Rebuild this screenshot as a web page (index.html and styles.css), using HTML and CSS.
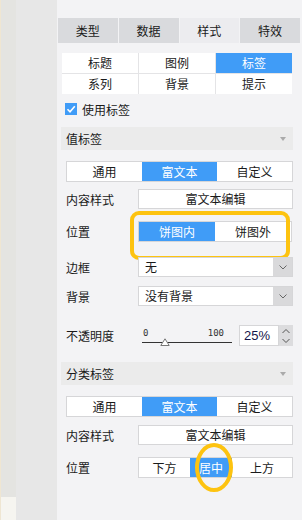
FILE: index.html
```html
<!DOCTYPE html>
<html lang="zh-CN">
<head>
    <meta charset="UTF-8">
    <title>样式 - 标签</title>
    <link rel="stylesheet" href="styles.css">
</head>
<body>
    <div class="page">
        <div class="side">
            <div class="side-edge"></div>
            <div class="side-gray"></div>
        </div>
        <div class="panel">
            <ul class="tabs">
                <li>类型</li>
                <li>数据</li>
                <li class="on">样式</li>
                <li>特效</li>
            </ul>
            <ul class="subtabs">
                <li>标题</li>
                <li>图例</li>
                <li class="on">标签</li>
                <li>系列</li>
                <li>背景</li>
                <li>提示</li>
            </ul>
            <label class="check">
                <span class="box">
                    <svg width="12" height="12" viewBox="0 0 12 12"><path d="M2.5 6.3 L5 8.8 L9.8 3.2" fill="none" stroke="#fff" stroke-width="1.6"/></svg>
                </span>
                使用标签
            </label>

            <div class="group">
                <div class="group-head">值标签<span class="caret"></span></div>
                <div class="group-body">
                    <ul class="seg seg-full">
                        <li>通用</li>
                        <li class="on">富文本</li>
                        <li>自定义</li>
                    </ul>
                    <div class="row row-content">
                        <span class="label">内容样式</span>
                        <button class="btn">富文本编辑</button>
                    </div>
                    <div class="row row-pos">
                        <span class="label">位置</span>
                        <ul class="seg seg-two">
                            <li class="on">饼图内</li>
                            <li>饼图外</li>
                        </ul>
                        <div class="mark-rect"></div>
                    </div>
                    <div class="row row-border">
                        <span class="label">边框</span>
                        <div class="select"><span class="val">无</span><span class="arrow"><svg width="8" height="5" viewBox="0 0 8 5"><path d="M0.5 0.5 L4 4 L7.5 0.5" fill="none" stroke="#666" stroke-width="1"/></svg></span></div>
                    </div>
                    <div class="row row-bg">
                        <span class="label">背景</span>
                        <div class="select"><span class="val">没有背景</span><span class="arrow"><svg width="8" height="5" viewBox="0 0 8 5"><path d="M0.5 0.5 L4 4 L7.5 0.5" fill="none" stroke="#666" stroke-width="1"/></svg></span></div>
                    </div>
                    <div class="row row-alpha">
                        <span class="label">不透明度</span>
                        <div class="slider">
                            <div class="ticks"><span>0</span><span>100</span></div>
                            <div class="track">
                                <svg class="thumb" width="10" height="8" viewBox="0 0 10 8"><path d="M5 0.8 L9.2 7.5 L0.8 7.5 Z" fill="#fff" stroke="#777" stroke-width="1"/></svg>
                            </div>
                        </div>
                        <div class="spin">
                            <span class="num">25%</span>
                            <span class="spin-btn">
                                <svg width="10" height="18" viewBox="0 0 10 18"><path d="M1.5 6 L5 2.5 L8.5 6" fill="none" stroke="#555" stroke-width="1"/><path d="M1.5 12 L5 15.5 L8.5 12" fill="none" stroke="#555" stroke-width="1"/></svg>
                            </span>
                        </div>
                    </div>
                </div>
            </div>

            <div class="group group-cat">
                <div class="group-head">分类标签<span class="caret"></span></div>
                <div class="group-body">
                    <ul class="seg seg-full">
                        <li>通用</li>
                        <li class="on">富文本</li>
                        <li>自定义</li>
                    </ul>
                    <div class="row row-content2">
                        <span class="label">内容样式</span>
                        <button class="btn">富文本编辑</button>
                    </div>
                    <div class="row row-pos2">
                        <span class="label">位置</span>
                        <ul class="seg seg-three">
                            <li class="w1">下方</li>
                            <li class="w2 on">居中</li>
                            <li class="w3">上方</li>
                        </ul>
                        <div class="mark-oval"></div>
                    </div>
                </div>
            </div>
        </div>
    </div>
</body>
</html>
```

FILE: styles.css
```css
*{
    margin: 0;
    padding: 0;
    list-style: none;
    box-sizing: border-box;
}
body{
    background: #f3f3f5;
    font-family: "Noto Sans CJK SC", "Noto Sans", sans-serif;
    font-size: 12px;
    color: #1a1a1a;
}
.page{
    display: flex;
    height: 520px;
    overflow: hidden;
}

/* left strip */
.side{
    display: flex;
    width: 57px;
    flex: none;
}
.side-edge{
    width: 16px;
    border-left: 1px solid #efe6d2;
    background: linear-gradient(#e4e4e1 0, #e4e4e1 497px, #f6f5f0 497px);
}
.side-gray{
    flex: 1;
    background: #e7e7e7;
}

.panel{
    flex: 1;
    padding-top: 18px;
}

/* top tabs */
.tabs{
    display: grid;
    grid-template-columns: repeat(4, 1fr);
    gap: 1px;
    width: 242px;
    margin-left: 1px;
    height: 25px;
}
.tabs li{
    background: #d9dadd;
    text-align: center;
    line-height: 25px;
}
.tabs li.on{
    background: #ececef;
}

/* sub tabs */
.subtabs{
    display: grid;
    grid-template-columns: repeat(3, 1fr);
    grid-auto-rows: 20px;
    gap: 1px;
    width: 230px;
    margin: 10px 0 0 5px;
    background: #e4e4e6;
}
.subtabs li{
    background: #fff;
    text-align: center;
    line-height: 20px;
}
.subtabs li.on{
    background: #409cf7;
    color: #fff;
}

.check{
    display: flex;
    align-items: center;
    gap: 5px;
    height: 20px;
    margin: 5px 0 0 8px;
}
.check .box{
    display: block;
    width: 12px;
    height: 12px;
    background: #409cf7;
}
.check svg{
    display: block;
}

/* groups */
.group{
    width: 232px;
    margin: 8px 0 0 4px;
}
.group-cat{
    margin-top: 16px;
}
.group-head{
    position: relative;
    height: 23px;
    line-height: 23px;
    padding-left: 5px;
    background: #ebebeb;
}
.caret{
    position: absolute;
    right: 7px;
    top: 10px;
    border-left: 3px solid transparent;
    border-right: 3px solid transparent;
    border-top: 4px solid #aaa;
}
.group-body{
    padding-left: 5px;
}

/* segmented buttons */
.seg{
    display: flex;
    border: 1px solid #d6d6d8;
    background: #fff;
    height: 21px;
}
.seg li{
    flex: 1;
    text-align: center;
    line-height: 19px;
}
.seg li.on{
    background: #409cf7;
    color: #fff;
}
.seg-full{
    margin-top: 11px;
}
.seg-two{
    width: 154px;
}
.seg-three{
    width: 155px;
}
.seg-three .w1{
    flex: none;
    width: 51px;
}
.seg-three .w2{
    flex: none;
    width: 42px;
}
.seg-three .w3{
    flex: none;
    width: 60px;
}

.row{
    position: relative;
    display: flex;
    align-items: center;
}
.label{
    width: 72px;
    flex: none;
}
.row-content{
    margin-top: 7px;
}
.row-pos{
    margin-top: 12px;
}
.row-border{
    margin-top: 15px;
}
.row-bg{
    margin-top: 9px;
}
.row-alpha{
    margin-top: 19px;
}
.row-content2{
    margin-top: 8px;
}
.row-pos2{
    margin-top: 12px;
}

.btn{
    width: 155px;
    height: 20px;
    border: 1px solid #d6d6d8;
    background: #fff;
    font-family: inherit;
    font-size: 12px;
    color: #1a1a1a;
    line-height: 18px;
}

.select{
    display: flex;
    width: 155px;
    height: 20px;
    border: 1px solid #d6d6d8;
    background: #fff;
}
.select .val{
    flex: 1;
    padding-left: 6px;
    line-height: 18px;
}
.select .arrow{
    width: 19px;
    display: flex;
    align-items: center;
    justify-content: center;
    background: #d9d9db;
}
.select .arrow svg{
    display: block;
}

/* slider */
.slider{
    width: 96px;
    padding-left: 4px;
    flex: none;
}
.ticks{
    display: flex;
    justify-content: space-between;
    width: 82px;
    font-family: "DejaVu Sans Mono", monospace;
    font-size: 9px;
    line-height: 10px;
    color: #333;
    padding-left: 1px;
}
.track{
    position: relative;
    width: 90px;
    height: 1px;
    margin-top: 4px;
    background: #333;
}
.thumb{
    position: absolute;
    left: 18px;
    top: -4px;
    display: block;
}

.spin{
    display: flex;
    height: 21px;
    margin-left: 5px;
}
.spin .num{
    width: 40px;
    border: 1px solid #d6d6d8;
    background: #fff;
    padding-left: 4px;
    font-family: "Liberation Sans", sans-serif;
    font-size: 13px;
    line-height: 19px;
    color: #15154a;
}
.spin-btn{
    width: 14px;
    display: flex;
    align-items: center;
    justify-content: center;
    background: #dcdcde;
}
.spin-btn svg{
    display: block;
}

/* yellow annotation marks */
.mark-rect{
    position: absolute;
    left: 64px;
    top: -10px;
    width: 160px;
    height: 49px;
    border: 4px solid #fdc310;
    border-radius: 9px;
}
.mark-oval{
    position: absolute;
    left: 129px;
    top: -14px;
    width: 38px;
    height: 49px;
    border: 4px solid #fdc310;
    border-radius: 50%;
}
```
